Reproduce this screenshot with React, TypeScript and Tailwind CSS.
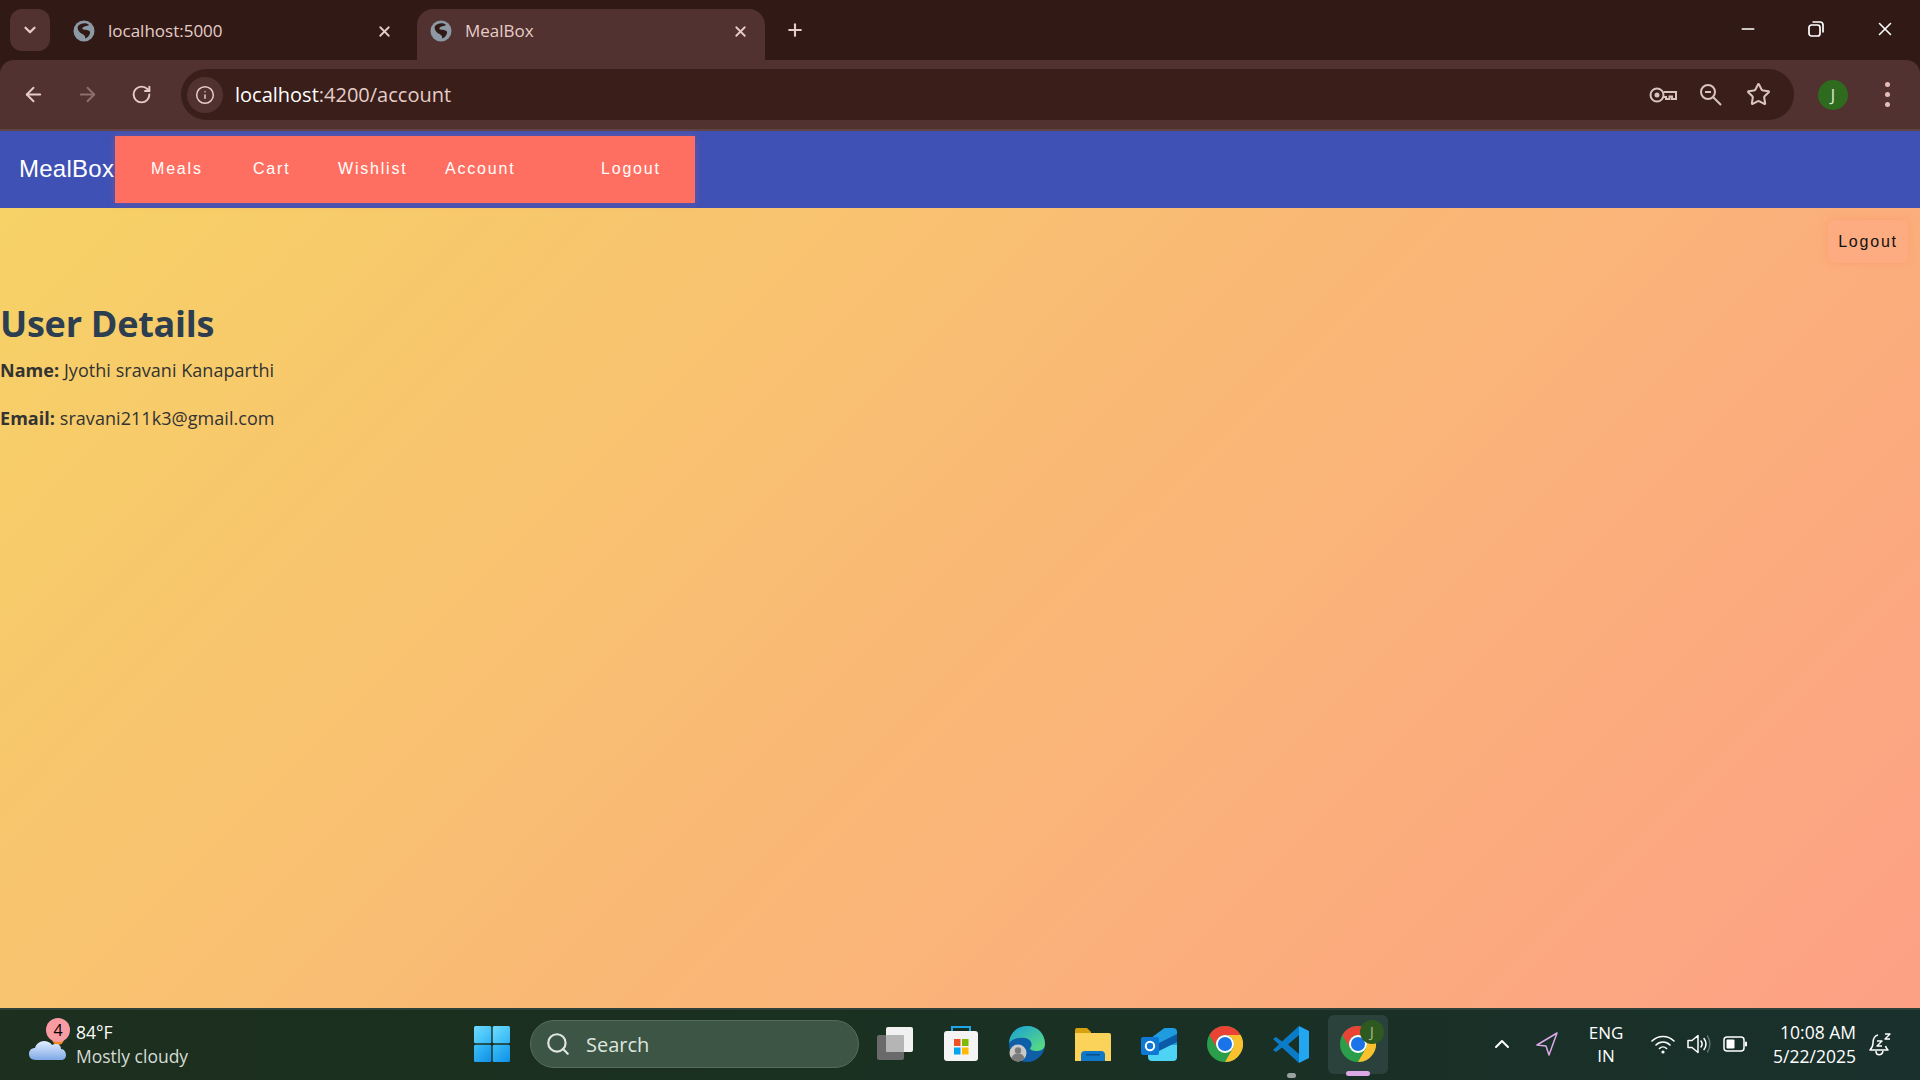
import { ChevronDown, X, Plus, ArrowLeft, ArrowRight, RotateCw, Info, Star, Search, ChevronUp, Minus } from 'lucide-react';

const GlobeIcon = () => (
  <svg width="22" height="22" viewBox="0 0 22 22" className="shrink-0">
    <circle cx="11" cy="11" r="10.5" fill="#8d9aa5" />
    <path d="M5 6C8 2.500 14 2.500 16 5 14 6.500 10.500 6 9.500 8 8.500 10.500 13.500 9 16.500 11 18.500 13 15 18 12 18.500 13 15 9.500 14.500 7 12.500 5 10.500 4 8 5 6Z" fill="#311a16" />
  </svg>
);

const ChromeLogo = () => (
  <svg width="36" height="36" viewBox="0 0 24 24">
    <circle cx="12" cy="12" r="12" fill="#2b9e4b" />
    <path d="M1.6 6A12 12 0 0 1 22.4 6H12A6 6 0 0 0 6.8 15Z" fill="#ea4335" />
    <path d="M22.4 6A12 12 0 0 1 12 24L17.2 15A6 6 0 0 0 12 6Z" fill="#fbc02d" />
    <circle cx="12" cy="12" r="6" fill="#fff" />
    <circle cx="12" cy="12" r="4.7" fill="#1a73e8" />
  </svg>
);

const KeyIcon = () => (
  <svg width="28" height="20" viewBox="0 0 28 20" fill="none" stroke="#d9c4bf" strokeWidth="2">
    <circle cx="8" cy="10" r="6.5" />
    <circle cx="8" cy="10" r="2.5" fill="#d9c4bf" stroke="none" />
    <path d="M14.5 7H27V14H23V11.5H20.5V14H17V12H14.5" />
  </svg>
);

const ZoomOutIcon = () => (
  <svg width="22" height="22" viewBox="0 0 22 22" fill="none" stroke="#d9c4bf" strokeWidth="2">
    <circle cx="8" cy="8" r="7" />
    <path d="M13 13L21 21" />
    <path d="M5 8H11" />
  </svg>
);

const WindowsLogo = () => (
  <svg width="36" height="36" viewBox="0 0 36 36">
    <defs>
      <linearGradient id="winTop" x1="0" y1="0" x2="1" y2="1">
        <stop offset="0" stopColor="#6fdcff" />
        <stop offset="1" stopColor="#2fb4f5" />
      </linearGradient>
      <linearGradient id="winBottom" x1="0" y1="0" x2="1" y2="1">
        <stop offset="0" stopColor="#3cc0f7" />
        <stop offset="1" stopColor="#0f8fe8" />
      </linearGradient>
    </defs>
    <rect x="0" y="0" width="17.3" height="17.3" rx="1.5" fill="url(#winTop)" />
    <rect x="18.7" y="0" width="17.3" height="17.3" rx="1.5" fill="url(#winTop)" />
    <rect x="0" y="18.7" width="17.3" height="17.3" rx="1.5" fill="url(#winBottom)" />
    <rect x="18.7" y="18.7" width="17.3" height="17.3" rx="1.5" fill="url(#winBottom)" />
  </svg>
);

const WeatherIcon = () => (
  <svg width="38" height="34" viewBox="0 0 38 34">
    <defs>
      <linearGradient id="cloud" x1="0" y1="0" x2="0" y2="1">
        <stop offset="0" stopColor="#e4efff" />
        <stop offset="1" stopColor="#7fa8e6" />
      </linearGradient>
    </defs>
    <circle cx="29" cy="13" r="6" fill="#f08a24" />
    <path d="M7 34C2 34 0 31 0 28c0-4 3-6 6-6 1-4 5-7 9-7 3 0 6 1 8 4 1-1 3-1 4-1 3 0 5 2 5 5 3 0 5 3 5 6 0 3-2 5-5 5Z" fill="url(#cloud)" />
  </svg>
);

const TaskView = () => (
  <svg width="36" height="36" viewBox="0 0 36 36">
    <rect x="0" y="9" width="27" height="25" rx="2" fill="#6a6a6a" />
    <rect x="9" y="1" width="27" height="25" rx="2" fill="#f1f1f1" />
    <rect x="9" y="9" width="18" height="17" rx="1" fill="#b5b5b5" />
  </svg>
);

const StoreIcon = () => (
  <svg width="36" height="36" viewBox="0 0 36 36">
    <path d="M9 6V1H27V6" fill="none" stroke="#1ba7e8" strokeWidth="2" />
    <rect x="1" y="5" width="34" height="30" rx="3" fill="#f4f4f4" />
    <rect x="11" y="13" width="6.5" height="7" fill="#f25022" />
    <rect x="19" y="13" width="6.5" height="7" fill="#7fba00" />
    <rect x="11" y="21.5" width="6.5" height="7" fill="#00a4ef" />
    <rect x="19" y="21.5" width="6.5" height="7" fill="#ffb900" />
  </svg>
);

const EdgeIcon = () => (
  <svg width="36" height="36" viewBox="0 0 36 36">
    <defs>
      <linearGradient id="edgeTop" x1="0" y1="0" x2="1" y2="1">
        <stop offset="0" stopColor="#1a9fd8" />
        <stop offset="1" stopColor="#5ee07a" />
      </linearGradient>
    </defs>
    <circle cx="18" cy="18" r="18" fill="#0f5ea8" />
    <path d="M0 17C1 6 9 0 18 0c11 0 18 8 18 18 0 4-3 7-8 7-4 0-7-1-7-3 3-2 2-9-5-10C9 11 3 13 0 17Z" fill="url(#edgeTop)" />
    <circle cx="9" cy="27" r="8.5" fill="#c9c9c9" />
    <circle cx="9" cy="24.5" r="3.2" fill="#7b7b7b" />
    <path d="M2.5 32.5c1-4 3.5-5 6.5-5s5.500 1 6.500 5a8.500 8.500 0 0 1-13 0Z" fill="#7b7b7b" />
  </svg>
);

const FilesIcon = () => (
  <svg width="36" height="34" viewBox="0 0 36 34">
    <path d="M0 3a2 2 0 0 1 2-2h10l4 4v6H0Z" fill="#d9a00d" />
    <path d="M0 6h34a2 2 0 0 1 2 2v26H0Z" fill="#fbd35a" />
    <path d="M6 34v-6a4 4 0 0 1 4-4h16a4 4 0 0 1 4 4v6Z" fill="#0f78c9" />
    <rect x="11" y="27" width="14" height="1.500" fill="#0a4f8c" />
  </svg>
);

const OutlookIcon = () => (
  <svg width="36" height="33" viewBox="0 0 36 33">
    <path d="M7 17h29v12a4 4 0 0 1-4 4H11a4 4 0 0 1-4-4Z" fill="#4fd3f5" />
    <path d="M10 10L22 1a4 4 0 0 1 3 -1h7a4 4 0 0 1 4 4v13H10Z" fill="#1f9be0" />
    <path d="M18 15l18-9v8l-18 9Z" fill="#0b5aa8" />
    <rect x="0" y="9" width="18" height="18" rx="2" fill="#0f78d4" />
    <circle cx="9" cy="18" r="4.200" fill="none" stroke="#fff" strokeWidth="2" />
  </svg>
);

const VsCodeIcon = () => (
  <svg width="36" height="37" viewBox="0 0 36 37">
    <path d="M26 0l10 5v27l-10 5Z" fill="#23a6f0" />
    <path d="M26 0L9 15.500 3 11 0 13l6 5.500L0 24l3 2 6-4.500L26 37v-9L15 18.500 26 9Z" fill="#0a7cc7" />
  </svg>
);

const NavArrowIcon = () => (
  <svg width="22" height="24" viewBox="0 0 22 24" fill="none" stroke="#dca8e6" strokeWidth="1.500" strokeLinejoin="round">
    <path d="M21 1L1 13l9 1 3 9Z" />
  </svg>
);

const WifiIcon = () => (
  <svg width="24" height="20" viewBox="0 0 24 20" fill="none" stroke="#fff" strokeWidth="1.600" strokeLinecap="round">
    <path d="M1 7c6-6 16-6 22 0M5 11c4-4 10-4 14 0M8.500 14.500c2-2 5-2 7 0" />
    <circle cx="12" cy="18" r="1.600" fill="#fff" stroke="none" />
  </svg>
);

const SpeakerIcon = () => (
  <svg width="24" height="20" viewBox="0 0 24 20" fill="none" stroke="#fff" strokeWidth="1.500" strokeLinejoin="round" strokeLinecap="round">
    <path d="M1 6.500h4L11 1.500v17L5 13.500H1Z" />
    <path d="M14 7c1.500 2 1.500 4 0 6M17 4.500c2.500 3.500 2.500 7.500 0 11" />
    <path d="M20.500 2c3 5 3 11 0 16" stroke="#5e6f6a" />
  </svg>
);

const BatteryIcon = () => (
  <svg width="24" height="16" viewBox="0 0 24 16">
    <rect x="1" y="1" width="20" height="14" rx="3" fill="none" stroke="#fff" strokeWidth="1.500" />
    <rect x="3.500" y="3.500" width="8" height="9" rx="1" fill="#fff" />
    <rect x="22" y="5.500" width="2" height="5" rx="1" fill="#fff" />
  </svg>
);

const BellIcon = () => (
  <svg width="23" height="24" viewBox="0 0 23 24" fill="none" stroke="#fff" strokeWidth="1.500" strokeLinejoin="round">
    <path d="M9 3C5 4 4 7 4 11c0 3-1 5-3 7h18c-1-1-2-2-2.500-4" />
    <path d="M7 19c0 5 6 5 7 0" />
    <path d="M8 9h5l-5 5h5M16 2h5l-5 5h5" strokeWidth="1.400" />
  </svg>
);

const navItems = [
  { label: 'Meals', cls: 'pl-[36px] w-[138px]' },
  { label: 'Cart', cls: 'w-[85px]' },
  { label: 'Wishlist', cls: 'w-[107px]' },
  { label: 'Account', cls: 'w-[156px]' },
  { label: 'Logout', cls: 'w-[94px]' },
];

const taskbarApps = [TaskView, StoreIcon, EdgeIcon, FilesIcon, OutlookIcon, ChromeLogo, VsCodeIcon];

export default function App() {
  return (
    <div className="flex h-screen w-screen flex-col overflow-hidden bg-[#311a16] font-['Open_Sans',sans-serif]">
      {/* Tab strip */}
      <div className="flex h-[60px] shrink-0 items-end text-[#e6cdc8]">
        <div className="mb-[9px] ml-[10px] flex h-[42px] w-[40px] items-center justify-center rounded-[12px] bg-[#513230]">
          <ChevronDown size={18} strokeWidth={3} />
        </div>
        <div className="flex h-[51px] w-[367px] items-center pb-[7px] pl-[23px] pr-[24px]">
          <GlobeIcon />
          <span className="ml-[13px] flex-1 text-[17px]">localhost:5000</span>
          <X size={17} strokeWidth={2.5} />
        </div>
        <div className="flex h-[51px] w-[348px] items-center rounded-t-[16px] bg-[#513230] pb-[7px] pl-[13px] pr-[16px]">
          <GlobeIcon />
          <span className="ml-[13px] flex-1 text-[17px]">MealBox</span>
          <X size={17} strokeWidth={2.5} />
        </div>
        <Plus size={20} strokeWidth={2.5} className="mb-[20px] ml-[20px]" />
        <div className="mb-[20px] ml-auto flex items-center gap-[49px] pr-[24px] text-white">
          <Minus size={20} strokeWidth={1.6} />
          <svg width="18" height="18" viewBox="0 0 18 18" fill="none" stroke="#fff" strokeWidth="1.700">
            <rect x="2" y="5" width="11" height="11" rx="2.500" />
            <path d="M5.500 2H13a3 3 0 0 1 3 3v7.500" />
          </svg>
          <X size={22} strokeWidth={1.7} />
        </div>
      </div>

      {/* Toolbar */}
      <div className="flex h-[71px] shrink-0 items-center rounded-t-[14px] border-b-2 border-[#5f4442] bg-[#513230] pl-[22px] text-[#e6cdc8]">
        <ArrowLeft size={23} strokeWidth={2} />
        <ArrowRight size={23} strokeWidth={2} className="ml-[31px] opacity-40" />
        <RotateCw size={21} strokeWidth={2.2} className="ml-[32px]" />
        <div className="ml-[29px] flex h-[51px] w-[1613px] items-center rounded-full bg-[#391e1a] pl-[6px] pr-[23px]">
          <div className="flex h-[36px] w-[36px] items-center justify-center rounded-full bg-[#513230]">
            <Info size={20} strokeWidth={1.8} />
          </div>
          <span className="ml-[12px] flex-1 text-[20px]">
            <span className="text-white">localhost</span>:4200/account
          </span>
          <KeyIcon />
          <div className="ml-[23px]"><ZoomOutIcon /></div>
          <Star size={25} strokeWidth={2} className="ml-[24px] text-[#d9c4bf]" />
        </div>
        <div className="ml-[24px] flex h-[30px] w-[30px] items-center justify-center rounded-full bg-[#2f6b1f] text-[16px] text-[#e2efd9]">J</div>
        <div className="ml-[37px] flex flex-col gap-[5px]">
          <span className="h-[5px] w-[5px] rounded-full bg-[#e8bdb6]" />
          <span className="h-[5px] w-[5px] rounded-full bg-[#e8bdb6]" />
          <span className="h-[5px] w-[5px] rounded-full bg-[#e8bdb6]" />
        </div>
      </div>

      <div className="flex flex-1 flex-col bg-[linear-gradient(135deg,#f6d365,#fda085)]">
        {/* App nav */}
        <nav className="flex h-[77px] shrink-0 items-center bg-[#3f51b5] pl-[19px] font-['Liberation_Sans',sans-serif] text-white">
          <span className="w-[96px] pb-[2px] text-[24px] tracking-[0.25px]">MealBox</span>
          <div className="flex h-[67px] w-[580px] items-center bg-[#ff6f61] pb-[2px] shadow-[0_0_8px_rgba(255,111,97,0.25)]">
            {navItems.map((item) => (
              <span key={item.label} className={`${item.cls} text-[16px] tracking-[1.8px]`}>
                {item.label}
              </span>
            ))}
          </div>
        </nav>

        {/* Page */}
        <main className="flex-1">
          <div className="flex justify-end pr-[12px] pt-[12px]">
            <div className="flex h-[43px] w-[80px] items-center justify-center rounded-[6px] bg-[#fdab80] font-['Liberation_Sans',sans-serif] text-[16px] tracking-[1.8px] text-[#111] shadow-[0_0_10px_rgba(255,127,97,0.35)]">
              Logout
            </div>
          </div>
          <h1 className="mt-[37px] text-[36px] leading-[48px] font-bold tracking-[-0.25px] text-[#2c3e50]">User Details</h1>
          <p className="mt-[10px] text-[18px] leading-[24px] tracking-[0.05px] text-[#333]">
            <b>Name:</b> Jyothi sravani Kanaparthi
          </p>
          <p className="mt-[24px] text-[18px] leading-[24px] tracking-[0.05px] text-[#333]">
            <b>Email:</b> sravani211k3@gmail.com
          </p>
        </main>
      </div>

      {/* Taskbar */}
      <footer className="flex h-[72px] shrink-0 items-center border-t-2 border-[#2f4039] bg-[linear-gradient(90deg,#1d2f1e,#1a3020_40%,#19302c)] pb-[2px] text-white">
        <div className="flex w-[474px] items-center pl-[29px]">
          <div className="relative h-[36px] w-[37px]">
            <WeatherIcon />
            <span className="absolute -top-[8px] left-[17px] flex h-[24px] w-[24px] items-center justify-center rounded-full bg-[#f99ba3] text-[16px] text-black">4</span>
          </div>
          <div className="ml-[10px] flex flex-col text-[17.5px] leading-[24px]">
            <span>84°F</span>
            <span className="text-[#d6dbd6]">Mostly cloudy</span>
          </div>
        </div>
        <WindowsLogo />
        <div className="ml-[20px] flex h-[48px] w-[329px] items-center rounded-full border border-[#566b5c] bg-[#3d5544] pl-[14px] text-[20px] text-[#dfe5df]">
          <Search size={26} strokeWidth={2} />
          <span className="ml-[15px] pt-[1px]">Search</span>
        </div>
        <div className="ml-[3px] flex items-center">
          {taskbarApps.map((Icon, i) => (
            <div key={i} className="relative flex h-[59px] w-[66px] items-center justify-center">
              <Icon />
              {i === 6 && <span className="absolute bottom-[-4px] h-[5px] w-[9px] rounded-full bg-[#9aa3a0]" />}
            </div>
          ))}
          <div className="relative ml-[4px] flex h-[59px] w-[60px] items-center justify-center rounded-[6px] bg-[#2b423c]">
            <ChromeLogo />
            <span className="absolute right-[4px] top-[5px] flex h-[24px] w-[24px] items-center justify-center rounded-full bg-[#2f5a1f] text-[14px] text-[#a9bd9a]">J</span>
            <span className="absolute bottom-[-2px] h-[5px] w-[24px] rounded-full bg-[#dca8e6]" />
          </div>
        </div>
        <div className="ml-[102px] flex items-center">
          <ChevronUp size={24} strokeWidth={2} />
          <div className="ml-[22px]"><NavArrowIcon /></div>
          <div className="ml-[25px] flex w-[46px] flex-col items-center text-[17px] leading-[23px]">
            <span>ENG</span>
            <span>IN</span>
          </div>
          <div className="ml-[22px]"><WifiIcon /></div>
          <div className="ml-[12px]"><SpeakerIcon /></div>
          <div className="ml-[12px]"><BatteryIcon /></div>
          <div className="ml-[10px] flex w-[99px] flex-col items-end text-[17.5px] leading-[24px]">
            <span>10:08 AM</span>
            <span>5/22/2025</span>
          </div>
          <div className="ml-[13px]"><BellIcon /></div>
        </div>
      </footer>
    </div>
  );
}
